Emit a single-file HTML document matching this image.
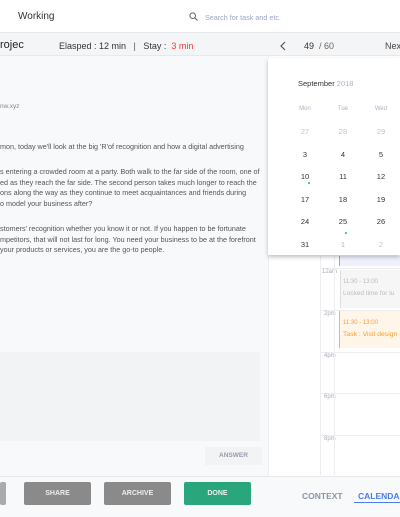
<html><head><style>
body{margin:0;width:400px;height:516px;overflow:hidden;background:#f8f9fb;font-family:"Liberation Sans",sans-serif;position:relative}
.a{position:absolute}
.t{font-size:7.2px;color:#555;white-space:nowrap;line-height:10.5px}
.btn{position:absolute;top:482px;height:23px;border-radius:2px;color:#eee;font-size:7px;font-weight:bold;text-align:center;line-height:23px;background:#8a8a8a}
.cal td{width:39px;text-align:center;font-size:7.5px;color:#333;height:22.5px;padding:0}
.hl{position:absolute;left:320px;width:80px;border-top:1px solid #eceef1;font-size:6px;color:#aab}
</style></head><body>
<div class="a" style="left:0;top:0;width:400px;height:32px;background:#fff;border-bottom:1px solid #e6e8eb"></div>
<div class="a" style="left:18px;top:11px;font-size:10px;color:#333">Working</div>
<svg class="a" style="left:189px;top:12px" width="9" height="9" viewBox="0 0 9 9"><circle cx="3.7" cy="3.7" r="2.8" fill="none" stroke="#666" stroke-width="1"/><path d="M5.8 5.8L8.5 8.5" stroke="#666" stroke-width="1.1"/></svg>
<div class="a" style="left:205px;top:13px;font-size:7.2px;color:#9aa6c0">Search for task and etc.</div>
<div class="a" style="left:0;top:33px;width:400px;height:22px;background:#f4f5f7;border-bottom:1px solid #e8e9ec"></div>
<div class="a" style="left:0;top:39px;font-size:11px;color:#222">rojec</div>
<div class="a" style="left:59px;top:41px;font-size:9px;color:#333">Elasped : 12 min &nbsp; <span style="color:#555">|</span> &nbsp; Stay : &nbsp;<span style="color:#f33">3 min</span></div>
<svg class="a" style="left:279px;top:41px" width="8" height="10"><path d="M6 1L2 5L6 9" fill="none" stroke="#555" stroke-width="1.2"/></svg>
<div class="a" style="left:304px;top:41px;font-size:9px;color:#333">49 <span style="color:#666">&nbsp;/ 60</span></div>
<div class="a" style="left:385px;top:41px;font-size:9px;color:#444">Nex</div>
<div class="a" style="left:268px;top:56px;width:132px;height:420px;background:#fff;border-left:1px solid #eee"></div>
<div class="a t" style="left:0;top:102px;color:#888;font-size:6.5px">nw.xyz</div>
<div class="a t" style="left:0;top:142px">mon, today we'll look at the big 'R'of recognition and how a digital advertising</div>
<div class="a t" style="left:0;top:167px">s entering a crowded room at a party. Both walk to the far side of the room, one of<br>ed as they reach the far side. The second person takes much longer to reach the<br>ons along the way as they continue to meet acquaintances and friends during<br>o model your business after?</div>
<div class="a t" style="left:0;top:224px">stomers' recognition whether you know it or not. If you happen to be fortunate<br>mpetitors, that will not last for long. You need your business to be at the forefront<br>your products or services, you are the go-to people.</div>
<div class="a" style="left:0;top:352px;width:260px;height:89px;background:#f2f3f5"></div>
<div class="a" style="left:205px;top:447px;width:57px;height:18px;background:#f2f3f5;font-size:6.5px;font-weight:bold;color:#99a;text-align:center;line-height:18px">ANSWER</div>
<div class="hl" style="top:268px;height:42px"><span style="margin-left:2px">12am</span></div>
<div class="hl" style="top:310px;height:42px"><span style="margin-left:4px">2pm</span></div>
<div class="hl" style="top:352px;height:41px"><span style="margin-left:4px">4pm</span></div>
<div class="hl" style="top:393px;height:42px"><span style="margin-left:4px">6pm</span></div>
<div class="hl" style="top:435px;height:40px;border-bottom:1px solid #eceef1"><span style="margin-left:4px">8pm</span></div>
<div class="a" style="left:320px;top:256px;width:1px;height:219px;background:#eceef1"></div>
<div class="a" style="left:334px;top:256px;width:1px;height:219px;background:#eceef1"></div>
<div class="a" style="left:339px;top:256px;width:61px;height:10px;background:#eef1fb;border-left:1px solid #9ab"></div>
<div class="a" style="left:340px;top:270px;width:60px;height:38px;background:#f6f6f7;border-left:1px solid #ddd;font-size:6px;color:#bbb;padding:6px 0 0 2px;line-height:12px;box-sizing:border-box">11:30 - 13:00<br><span style="font-size:6.5px">Locked time for lu</span></div>
<div class="a" style="left:339px;top:311px;width:61px;height:37px;background:#fff5e8;border-left:1px solid #f5b55a;font-size:6px;color:#f5a030;padding:6px 0 0 3px;line-height:12px;box-sizing:border-box">11:30 - 13:00<br><span style="font-size:6.8px">Task : Visit design</span></div>
<div class="a" style="left:268px;top:58px;width:132px;height:197px;background:#fff;box-shadow:0 2px 4px rgba(0,0,0,.25)"></div>
<div class="a" style="left:298px;top:79px;font-size:7.5px;color:#333">September <span style="color:#a9b4c8">2018</span></div>
<table class="a cal" style="left:286px;top:98px;border-collapse:collapse">
<tr><td style="font-size:6px;color:#a9b4c8;height:20px">Mon</td><td style="font-size:6px;color:#a9b4c8">Tue</td><td style="font-size:6px;color:#a9b4c8">Wed</td></tr>
<tr><td style="color:#bcc4d2">27</td><td style="color:#bcc4d2">28</td><td style="color:#bcc4d2">29</td></tr>
<tr><td>3</td><td>4</td><td>5</td></tr>
<tr><td>10</td><td>11</td><td>12</td></tr>
<tr><td>17</td><td>18</td><td>19</td></tr>
<tr><td>24</td><td>25</td><td>26</td></tr>
<tr><td>31</td><td style="color:#a9b4c8">1</td><td style="color:#bcc4d2">2</td></tr>
</table>
<div class="a" style="left:308px;top:182px;width:2px;height:2px;border-radius:1px;background:#2a9"></div>
<div class="a" style="left:345px;top:232px;width:2px;height:2px;border-radius:1px;background:#2a9"></div>
<div class="a" style="left:0;top:476px;width:400px;height:40px;background:#f8f9fb;border-top:1px solid #e6e8eb"></div>
<div class="btn" style="left:0;width:6px;background:#aaa"></div>
<div class="btn" style="left:24px;width:67px">SHARE</div>
<div class="btn" style="left:104px;width:67px">ARCHIVE</div>
<div class="btn" style="left:184px;width:67px;background:#29a67c">DONE</div>
<div class="a" style="left:302px;top:491px;font-size:8.5px;font-weight:bold;color:#8a95a8">CONTEXT</div>
<div class="a" style="left:358px;top:491px;font-size:8.5px;font-weight:bold;color:#4a7cf0">CALENDA</div>
<div class="a" style="left:354px;top:502px;width:46px;height:1px;background:#4a7cf0"></div>
</body></html>
